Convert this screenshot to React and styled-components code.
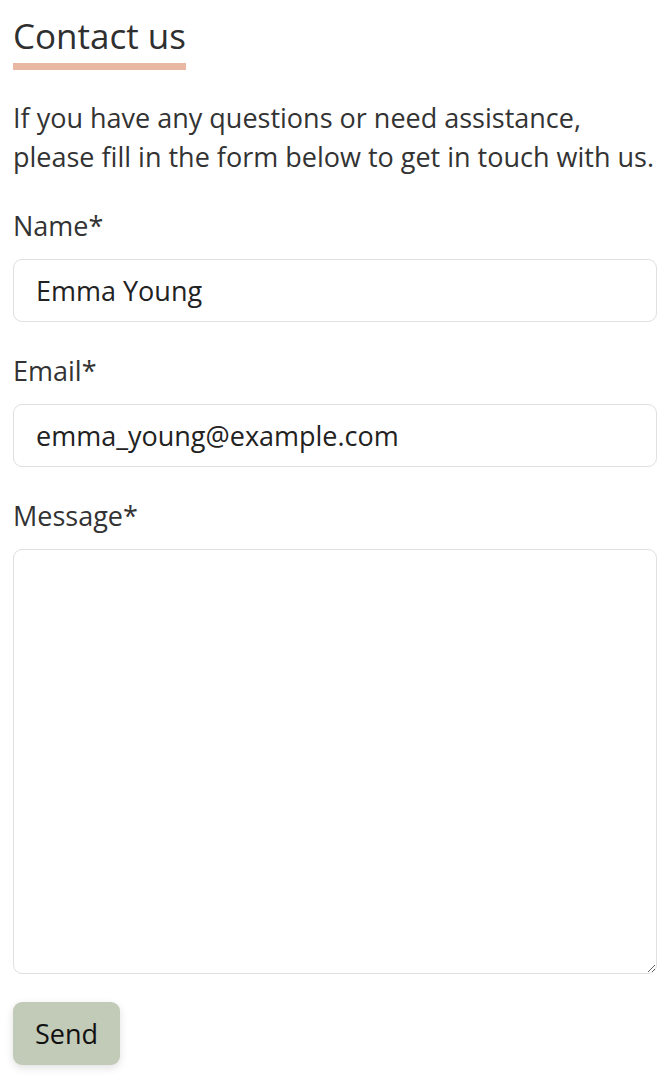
import React, { useState } from 'react';
import styled, { createGlobalStyle } from 'styled-components';

const GlobalStyle = createGlobalStyle`
  html, body { margin: 0; padding: 0; background: #ffffff; }
  body { font-family: "Open Sans", "Noto Sans", sans-serif; color: #333333; }
  * { box-sizing: border-box; }
`;

// --- STYLED COMPONENTS ---
const Page = styled.div`
  padding: 14px 14px 14px 13px;
  display: flex;
  flex-direction: column;
`;
const Title = styled.h1`
  margin: 0;
  font-size: 35px;
  font-weight: 400;
  line-height: 44px;
  color: #2f2f2f;
  align-self: flex-start;
  padding-bottom: 5px;
  border-bottom: 7px solid #e8b8a2;
`;
const Intro = styled.p`
  margin: 28px 0 0;
  font-size: 27px;
  line-height: 39px;
  color: #333;
  white-space: nowrap;
`;
const Form = styled.form`
  display: flex;
  flex-direction: column;
  margin-top: 31px;
`;
const Field = styled.div`
  display: flex;
  flex-direction: column;
  gap: 14px;
  margin-bottom: 30px;
`;
const Label = styled.label`
  font-size: 27px;
  line-height: 38px;
  color: #333;
`;
const Input = styled.input`
  width: 100%;
  height: 63px;
  padding: 0 22px;
  font-family: inherit;
  font-size: 27px;
  color: #222;
  background: #fff;
  border: 1.5px solid #dfdfe4;
  border-radius: 9px;
  outline: none;
`;
const TextArea = styled.textarea`
  width: 100%;
  height: 425px;
  padding: 16px 22px;
  font-family: inherit;
  font-size: 27px;
  color: #222;
  background: #fff;
  border: 1.5px solid #dfdfe4;
  border-radius: 9px;
  outline: none;
  resize: vertical;
`;
const SendButton = styled.button`
  align-self: flex-start;
  margin-top: -2px;
  height: 63px;
  padding: 0 22px;
  font-family: inherit;
  font-size: 27px;
  color: #111;
  background: #c2cab8;
  border: none;
  border-radius: 9px;
  box-shadow: 0 3px 8px rgba(0, 0, 0, 0.12);
  cursor: pointer;
`;

const App = () => {
  const [form, setForm] = useState({
    name: 'Emma Young',
    email: 'emma_young@example.com',
    message: '',
  });

  const handleChange = (e) => {
    const { name, value } = e.target;
    setForm(prev => ({ ...prev, [name]: value }));
  };

  return (
    <>
      <GlobalStyle />
      <Page>
        <Title>Contact us</Title>
        <Intro>
          If you have any questions or need assistance,
          <br />
          please fill in the form below to get in touch with us.
        </Intro>
        <Form onSubmit={e => e.preventDefault()}>
          <Field>
            <Label htmlFor="name">Name*</Label>
            <Input id="name" name="name" value={form.name} onChange={handleChange} />
          </Field>
          <Field>
            <Label htmlFor="email">Email*</Label>
            <Input id="email" name="email" type="email" value={form.email} onChange={handleChange} />
          </Field>
          <Field>
            <Label htmlFor="message">Message*</Label>
            <TextArea id="message" name="message" value={form.message} onChange={handleChange} />
          </Field>
          <SendButton type="submit">Send</SendButton>
        </Form>
      </Page>
    </>
  );
};

export default App;
